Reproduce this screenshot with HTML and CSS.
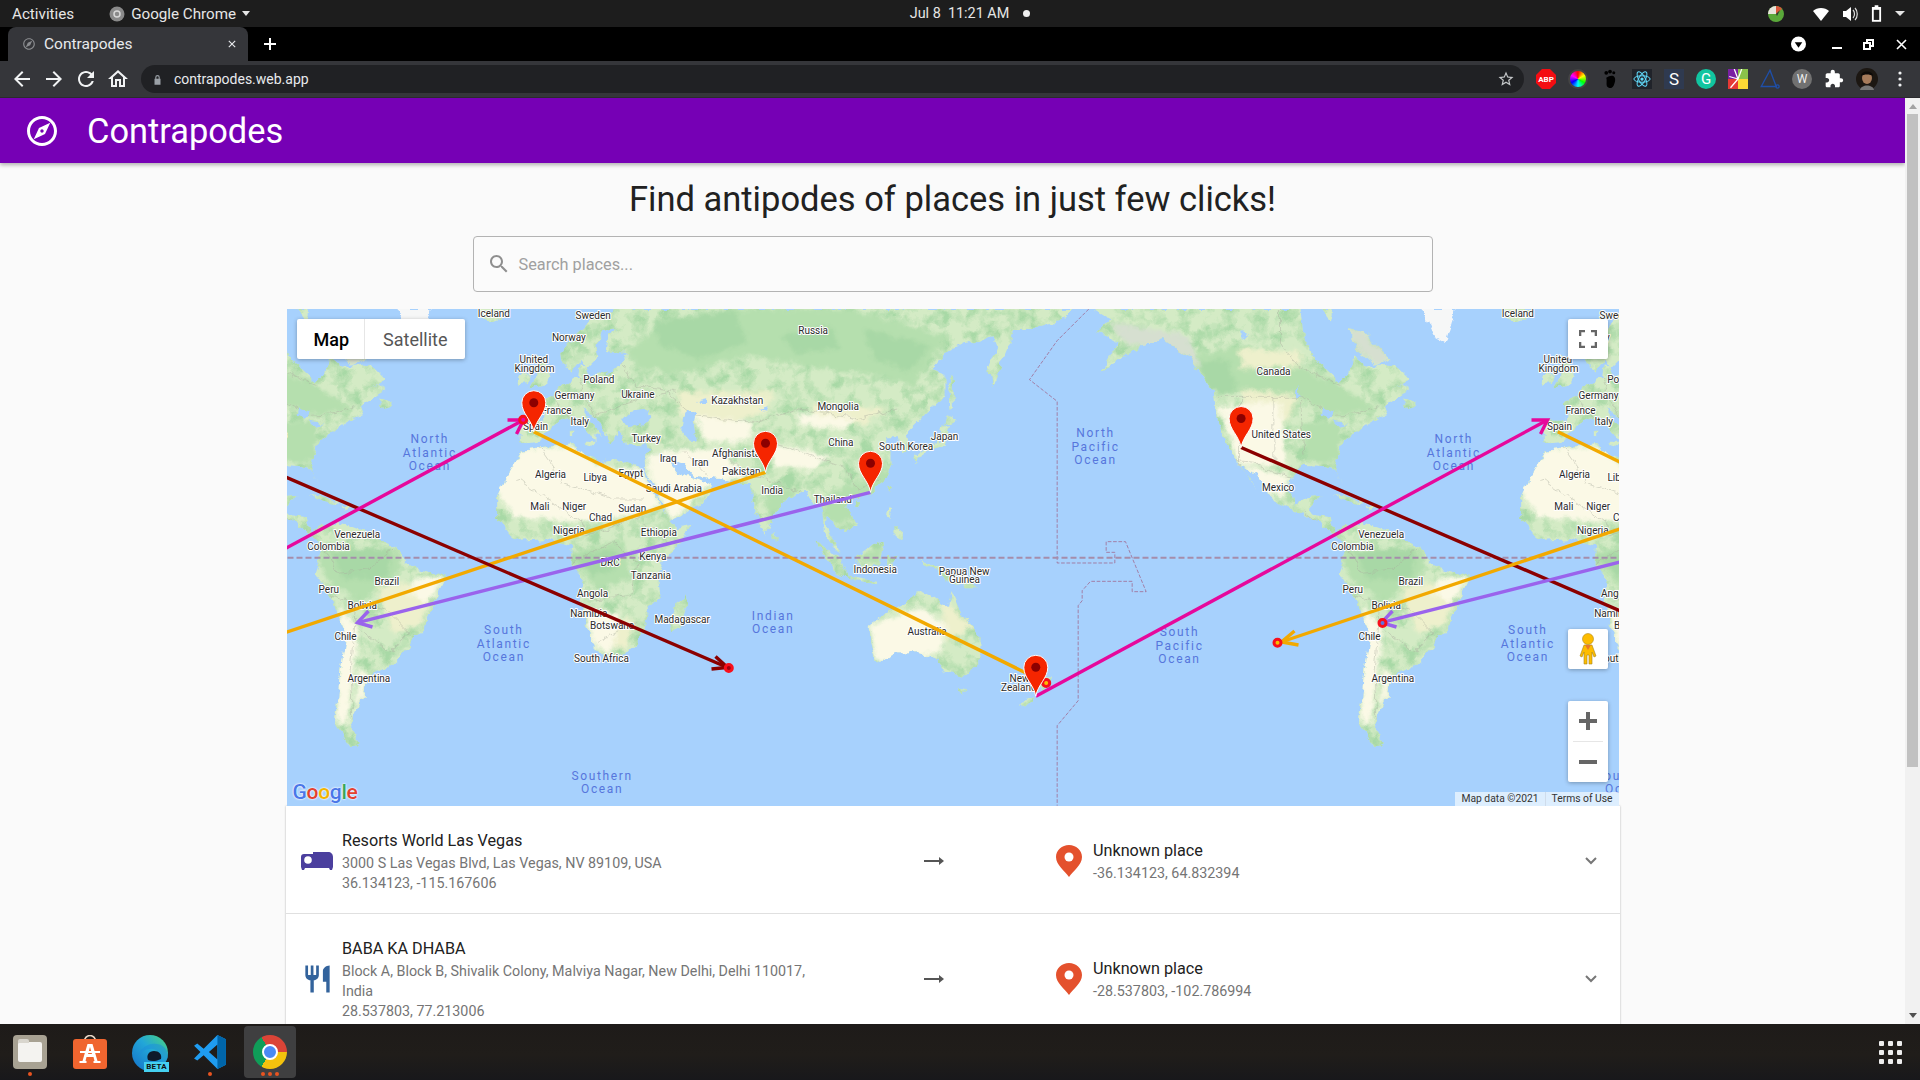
FILE: index.html
```html
<!DOCTYPE html>
<html lang="en">
<head>
<meta charset="utf-8">
<title>Contrapodes</title>
<link rel="stylesheet" href="styles.css">
</head>
<body>
<header class="os-bar">
  <div class="os-left">
    <span class="os-item">Activities</span>
    <span class="os-app"><svg class="os-app-icon" viewBox="0 0 16 16"><circle cx="8" cy="8" r="7.5" fill="#8a8a8a"/><circle cx="8" cy="8" r="3" fill="none" stroke="#d8d8d8" stroke-width="1.5"/></svg>Google Chrome<i class="caret"></i></span>
  </div>
  <div class="os-clock"><span>Jul 8&nbsp;&nbsp;11:21 AM</span><i class="os-dot"></i></div>
  <div class="os-tray">
    <svg class="tray-pie" viewBox="0 0 16 16"><circle cx="8" cy="8" r="8" fill="#5aa83a"/><path d="M8 8V0a8 8 0 0 0-8 8z" fill="#e8e4dc"/><path d="M8 8L8 0a8 8 0 0 1 6 3z" fill="#d8563a"/><path d="M8 8l4-4-3 6z" fill="#333"/></svg>
    <svg class="tray-ic tray-wifi" viewBox="0 0 16 16"><path d="M0 5c4-4 12-4 16 0l-8 10z" fill="#fff"/></svg>
    <svg class="tray-ic tray-vol" viewBox="0 0 16 16"><path d="M1 5h3l5-4v14l-5-4H1z" fill="#fff"/><path d="M11 4c2 2 2 6 0 8M13 2c3 3 3 9 0 12" fill="none" stroke="#ddd" stroke-width="1.2"/></svg>
    <svg class="tray-ic tray-bat" viewBox="0 0 12 18"><path d="M4 0h4v2h3v16H1V2h3z" fill="#fff"/><rect x="3" y="5" width="6" height="11" fill="#1d1d1d"/></svg>
    <i class="caret caret-tray"></i>
  </div>
</header>

<div class="tab-strip">
  <div class="tab">
    <svg class="tab-fav" viewBox="0 0 24 24"><path d="M12 2C6.48 2 2 6.48 2 12s4.48 10 10 10 10-4.48 10-10S17.52 2 12 2zm0 18c-4.41 0-8-3.59-8-8s3.59-8 8-8 8 3.59 8 8-3.59 8-8 8zm-5.5-2.5l7.51-3.49L17.5 6.5 9.99 9.99 6.5 17.5z"/></svg>
    <span class="tab-title">Contrapodes</span>
    <svg class="tab-close" viewBox="0 0 10 10"><path d="M1 1l8 8M9 1l-8 8"/></svg>
  </div>
  <svg class="tab-new" viewBox="0 0 12 12"><path d="M6 0v12M0 6h12"/></svg>
  <div class="win-controls">
    <svg class="win-drop" viewBox="0 0 16 16"><circle cx="8" cy="8" r="8" fill="#fff"/><path d="M4 6h8l-4 6z" fill="#000"/></svg>
    <i class="win-min"></i>
    <svg class="win-max" viewBox="0 0 11 11"><path d="M3 0h8v8H8v3H0V3h3zM5 2v1h3v3h1V2zM2 5v4h4V5z" fill="#fff" fill-rule="evenodd"/></svg>
    <svg class="win-close" viewBox="0 0 11 11"><path d="M1 1l9 9M10 1l-9 9"/></svg>
  </div>
</div>

<div class="chrome-bar">
  <div class="nav-icons">
    <svg class="nav-ic" viewBox="0 0 24 24"><path d="M20 11H7.83l5.59-5.59L12 4l-8 8 8 8 1.41-1.41L7.83 13H20z"/></svg>
    <svg class="nav-ic" viewBox="0 0 24 24"><path d="M12 4l-1.41 1.41L16.17 11H4v2h12.17l-5.58 5.59L12 20l8-8z"/></svg>
    <svg class="nav-ic" viewBox="0 0 24 24"><path d="M17.65 6.35C16.2 4.9 14.21 4 12 4c-4.42 0-7.99 3.58-7.99 8s3.57 8 7.99 8c3.73 0 6.84-2.55 7.73-6h-2.08c-.82 2.33-3.04 4-5.65 4-3.31 0-6-2.69-6-6s2.69-6 6-6c1.66 0 3.14.69 4.22 1.78L13 11h7V4l-2.35 2.35z"/></svg>
    <svg class="nav-ic" viewBox="0 0 24 24"><path d="M12 5.69l5 4.5V18h-2v-6H9v6H7v-7.81l5-4.5M12 3L2 12h3v8h6v-6h2v6h6v-8h3L12 3z"/></svg>
  </div>
  <div class="omnibox">
    <svg class="lock" viewBox="0 0 12 14"><path d="M3 6V4a3 3 0 0 1 6 0v2h1v8H2V6zm1.5 0h3V4a1.5 1.5 0 0 0-3 0z" fill-rule="evenodd"/></svg>
    <span class="url">contrapodes.web.app</span>
    <svg class="star" viewBox="0 0 24 24"><path d="M22 9.24l-7.19-.62L12 2 9.19 8.63 2 9.24l5.46 4.73L5.82 21 12 17.27 18.18 21l-1.63-7.03L22 9.24zM12 15.4l-3.76 2.27 1-4.28-3.32-2.88 4.38-.38L12 6.1l1.71 4.04 4.38.38-3.32 2.88 1 4.28L12 15.4z"/></svg>
  </div>
  <div class="ext-icons">
    <span class="ext ext-abp">ABP</span>
    <span class="ext ext-wheel"></span>
    <svg class="ext" viewBox="0 0 16 16"><path d="M5 7c4-3 8-2 7 3-1 4-2 6-5 5-3-1-1-5-2-8z" fill="#000"/><circle cx="5" cy="3" r="1.5" fill="#000"/><circle cx="8" cy="2" r="1.5" fill="#000"/><circle cx="11" cy="3" r="1.2" fill="#000"/></svg>
    <svg class="ext" viewBox="0 0 16 16"><rect width="16" height="16" fill="#20232a"/><g fill="none" stroke="#61dafb" stroke-width=".8"><ellipse cx="8" cy="8" rx="6.5" ry="2.6"/><ellipse cx="8" cy="8" rx="6.5" ry="2.6" transform="rotate(60 8 8)"/><ellipse cx="8" cy="8" rx="6.5" ry="2.6" transform="rotate(120 8 8)"/></g><circle cx="8" cy="8" r="1.3" fill="#61dafb"/></svg>
    <span class="ext ext-s">S</span>
    <span class="ext ext-g">G</span>
    <svg class="ext" viewBox="0 0 16 16"><rect width="8" height="8" fill="#7a1fa2"/><rect x="8" width="8" height="8" fill="#8bc34a"/><rect y="8" width="8" height="8" fill="#e53935"/><rect x="8" y="8" width="8" height="8" fill="#fdd835"/><path d="M8 8L5 0M8 8l3-8M8 8L2 15M8 8l-7-2" stroke="#fff"/></svg>
    <svg class="ext" viewBox="0 0 16 16"><path d="M8 1L1 14h12z" fill="none" stroke="#1f4fa8" stroke-width="1.1"/><circle cx="14" cy="14" r="1.3" fill="none" stroke="#1f4fa8"/></svg>
    <span class="ext ext-w">W</span>
    <svg class="ext" viewBox="0 0 24 24"><path d="M20.5 11H19V7c0-1.1-.9-2-2-2h-4V3.5C13 2.12 11.88 1 10.5 1S8 2.12 8 3.5V5H4c-1.1 0-1.99.9-1.99 2v3.8H3.5c1.49 0 2.7 1.21 2.7 2.7s-1.21 2.7-2.7 2.7H2V20c0 1.1.9 2 2 2h3.8v-1.5c0-1.49 1.21-2.7 2.7-2.7 1.49 0 2.7 1.21 2.7 2.7V22H17c1.1 0 2-.9 2-2v-4h1.5c1.38 0 2.5-1.12 2.5-2.5S21.88 11 20.5 11z" fill="#fff"/></svg>
    <svg class="ext ext-avatar" viewBox="0 0 22 22"><circle cx="11" cy="11" r="11" fill="#1c1712"/><ellipse cx="11" cy="10" rx="5" ry="6" fill="#a67b5b"/><path d="M5 8c0-6 12-6 12 0-3-2-9-2-12 0z" fill="#0d0a08"/><path d="M4 22c1-6 13-6 14 0z" fill="#777"/></svg>
    <svg class="ext ext-menu" viewBox="0 0 4 16"><circle cx="2" cy="2" r="1.6"/><circle cx="2" cy="8" r="1.6"/><circle cx="2" cy="14" r="1.6"/></svg>
  </div>
</div>

<div class="viewport">
  <div class="page">
    <div class="app-bar">
      <svg class="app-icon" viewBox="0 0 24 24"><path d="M12 2C6.48 2 2 6.48 2 12s4.48 10 10 10 10-4.48 10-10S17.52 2 12 2zm0 18c-4.41 0-8-3.59-8-8s3.59-8 8-8 8 3.59 8 8-3.59 8-8 8zm-5.5-2.5l7.51-3.49L17.5 6.5 9.99 9.99 6.5 17.5zm5.5-6.6c.61 0 1.1.49 1.1 1.1s-.49 1.1-1.1 1.1-1.1-.49-1.1-1.1.49-1.1 1.1-1.1z"/></svg>
      <span class="app-title">Contrapodes</span>
    </div>
    <main class="content">
      <h1 class="headline">Find antipodes of places in just few clicks!</h1>
      <div class="search">
        <svg class="search-icon" viewBox="0 0 24 24"><path d="M15.5 14h-.79l-.28-.27C15.41 12.59 16 11.11 16 9.5 16 5.91 13.09 3 9.5 3S3 5.91 3 9.5 5.91 16 9.5 16c1.61 0 3.09-.59 4.23-1.57l.27.28v.79l5 4.99L20.49 19l-4.99-5zm-6 0C7.01 14 5 11.99 5 9.5S7.01 5 9.5 5 14 7.01 14 9.5 11.99 14 9.5 14z"/></svg>
        <span class="search-text">Search places...</span>
      </div>

      <section class="map">
        <svg class="map-canvas" viewBox="286.5 309 1332 497" xmlns="http://www.w3.org/2000/svg">
          <defs>
            <filter id="soft" x="-5%" y="-5%" width="110%" height="110%"><feGaussianBlur stdDeviation="7"/></filter>
            <filter id="rough" x="-3%" y="-3%" width="106%" height="106%" color-interpolation-filters="sRGB" primitiveUnits="userSpaceOnUse">
              <feTurbulence type="fractalNoise" baseFrequency=".035" numOctaves="3" seed="4" result="n"/>
              <feDisplacementMap in="SourceGraphic" in2="n" scale="26" xChannelSelector="R" yChannelSelector="G"/>
            </filter>
            <filter id="mottle" x="0" y="0" width="100%" height="100%" color-interpolation-filters="sRGB">
              <feTurbulence type="fractalNoise" baseFrequency=".022" numOctaves="4" seed="9"/>
              <feColorMatrix type="matrix" values="0 0 0 0 .66  0 0 0 0 .85  0 0 0 0 .65  2.8 0 0 0 -1.15"/>
            </filter>
            <path id="east-shape" d="M112 345L130 335 185 335 195 300 175 285 235 240 290 205 295 165 320 175 330 200 390 190 420 160 440 135 375 125 385 80 410 60 375 65 345 110 350 150 320 180 300 150 275 185 250 165 245 125 290 75 340 30 400 0 1780 0 1730 40 1660 60 1600 60 1590 100 1560 170 1535 235 1525 170 1550 110 1540 85 1460 100 1400 125 1355 180 1395 195 1395 260 1340 310 1300 350 1275 375 1285 420 1265 430 1255 385 1210 385 1230 420 1230 470 1210 520 1170 555 1125 570 1090 590 1115 620 1125 650 1090 670 1075 650 1040 625 1035 650 1080 735 1070 730 1030 670 1025 590 1000 590 975 545 910 575 870 640 855 680 820 600 810 525 770 525 720 510 640 500 610 465 555 445 590 490 620 500 655 510 695 530 680 565 620 610 565 637 540 580 510 510 497 480 495 440 505 425 495 408 430 410 425 385 415 365 390 405 365 360 345 325 305 300 345 360 368 385 345 375 345 400 325 365 280 325 260 325 225 345 195 370 180 400 150 405 120 400Z
              M125 425L165 420 240 410 285 405 290 425 345 445 350 465 375 455 400 450 490 480 497 490 510 530 540 590 565 635 590 660 630 650 600 700 560 745 530 790 540 860 500 900 490 960 470 1000 430 1040 370 1050 345 1020 320 950 300 880 310 810 270 760 275 710 200 690 120 695 80 670 50 630 50 560 75 510 110 450Z
              M610 855L622 880 600 950 575 970 568 935 590 880Z
              M170 135L195 165 210 205 200 225 150 235 170 200Z M115 200L145 195 140 225 110 230Z M0 0L75 0 70 25 30 40 0 25Z
              M268 362L278 362 278 386 268 386Z M315 398L345 398 340 412 318 406Z M878 665L892 690 880 697 875 680Z
              M1305 460L1340 425 1390 410 1410 360 1390 345 1378 395 1340 415 1302 445Z M1400 320L1430 335 1410 350 1395 345Z M1405 205L1420 210 1420 295 1410 300Z
              M1228 530L1233 535 1222 552Z M1130 575L1142 578 1135 592 1128 588Z M1225 590L1235 600 1230 630 1220 620Z M1245 650L1270 670 1270 695 1245 680Z
              M1125 745L1160 720 1190 695 1208 710 1195 770 1140 775Z M1010 700L1050 725 1080 755 1105 810 1075 795 1035 745Z M1105 800L1190 815 1185 822 1105 812Z M1220 745L1250 740 1235 765 1245 790 1220 790Z
              M1315 755L1370 770 1420 795 1490 835 1460 835 1400 815 1370 790Z
              M1165 950L1240 900 1295 870 1315 845 1350 860 1400 895 1410 840 1440 910 1500 990 1500 1050 1450 1100 1390 1090 1370 1050 1320 1030 1240 1030 1190 1065 1165 970Z
              M1435 1135L1460 1140 1445 1160Z M1695 1098L1715 1100 1705 1125 1685 1145 1680 1130Z M1660 1160L1660 1175 1635 1197 1618 1185Z"/>
            <path id="am-shape" d="M-20 0L30 30 -10 70 50 100 0 190 80 140 130 105 190 90 260 140 340 250 350 340 385 420 410 455 472 545 445 510 420 465 470 500 510 565 545 590 600 610 650 640 695 670 715 690 735 730 715 790 760 860 810 980 790 1100 775 1240 820 1315 850 1300 820 1250 860 1160 880 1100 960 1060 1040 960 1075 880 1105 800 1000 770 960 720 870 670 790 640 740 650 705 668 690 625 640 618 625 600 660 560 620 565 585 590 565 545 570 500 605 470 680 475 705 485 722 525 700 470 730 400 780 360 830 330 860 315 850 295 930 240 905 225 870 245 925 210 880 165 800 175 755 140 750 190 720 220 660 165 610 90 600 0Z
              M740 60L790 70 870 150 830 170 770 120Z M660 0L700 0 690 40Z M905 265L950 285 920 300Z M700 555L745 560 790 585 740 575Z M798 590L830 595 805 605Z"/>
            <clipPath id="clip-east"><use href="#east-shape"/></clipPath>
            <clipPath id="clip-am"><use href="#am-shape"/></clipPath>
            <g id="land-east" transform="translate(480 309) scale(.33333)">
              <g filter="url(#rough)">
              <use href="#east-shape" class="land"/>
              <g clip-path="url(#clip-east)">
                <rect x="-50" y="-20" width="1900" height="1300" filter="url(#mottle)"/>
                <g filter="url(#soft)">
                  <path class="forest" d="M440 130L560 30 760 0 1100 0 1400 80 1300 230 1200 200 1040 180 800 140 620 190 470 180Z"/>
                  <path class="forest-d" d="M520 40L760 0 800 100 660 150 540 110Z M1150 60L1350 110 1290 190 1180 150Z M900 80L1050 50 1080 120 940 130Z"/>
                  <path class="forest" d="M280 730L430 690 450 800 360 840 300 790Z M1030 560L1220 480 1240 540 1110 640 1040 640Z M1125 745L1208 710 1195 770Z M1315 755L1490 835 1400 815Z M860 540L960 540 920 590 860 620Z"/>
                  <path class="forest-d" d="M290 740L400 720 410 780 330 800Z"/>
                  <path class="pale" d="M590 250L880 250 860 310 700 350 600 320Z M1000 280L1220 300 1150 345 1000 340Z M370 930L460 930 440 1020 360 1010Z M1380 870L1480 950 1400 1000Z"/>
                  <path class="cream" d="M40 540L120 420 290 410 350 470 490 480 540 590 480 620 300 640 100 625Z M500 440L590 420 720 420 800 500 690 530 570 635 510 510Z M640 320L820 340 800 400 680 400Z M870 400L1050 440 1000 480 880 470Z M950 310L1130 330 1090 360 960 350Z M310 890L420 920 390 1040 340 1010Z M1165 950L1320 890 1400 950 1380 1030 1190 1060Z"/>
                </g>
                <path class="border" d="M110 510L250 600 300 640M180 420L250 520 400 570 490 570M300 640L320 680 480 620M495 640L560 700M270 760L400 700 470 760 450 860 330 870M350 1000L470 940M610 430L680 500M720 420L800 500 860 510 960 550M640 320L820 340 960 300 1130 330 1250 300M880 400L1100 480 1130 540 1200 510M200 240L280 340M290 210L340 320 420 290 560 250 640 320M420 160L470 230 590 250"/>
              </g>
              <path class="sea" d="M425 330L450 305 490 300 510 325 490 345 440 355Z M625 300L610 330 605 370 625 395 650 395 640 350 650 310Z M655 270L680 265 680 285 660 285Z M830 300L865 295 860 305Z"/>
              </g>
            </g>
            <g id="land-am" transform="translate(1100 309) scale(.33333)">
              <g filter="url(#rough)">
              <use href="#am-shape" class="land"/>
              <path class="snow" d="M960 0L1065 0 1035 100 1000 80Z"/>
              <g clip-path="url(#clip-am)">
                <rect x="-50" y="-20" width="1250" height="1400" filter="url(#mottle)"/>
                <g filter="url(#soft)">
                  <path class="forest" d="M260 140L420 110 600 170 730 240 830 300 700 320 600 270 420 240 350 260Z M740 720L960 720 980 780 860 880 770 830 730 780Z M600 340L720 340 720 460 620 460Z M560 580L700 670 640 640Z"/>
                  <path class="forest-d" d="M280 160L380 150 410 250 350 260Z M760 720L950 720 930 810 800 810Z"/>
                  <path class="pale" d="M420 120L600 130 600 170 420 180Z M420 240L590 260 560 340 430 340Z M900 830L1080 820 1030 950 950 970Z"/>
                  <path class="cream" d="M350 290L540 280 560 470 420 470Z M430 470L570 500 550 570 490 550Z M790 890L850 960 830 1090 810 1250 780 1240Z M850 1080L880 1100 830 1240Z M1010 810L1100 800 1060 880 1000 860Z"/>
                  <path class="rock" d="M30 40L260 80 300 180 190 100 80 110Z M740 60L790 70 870 150 830 170 770 120Z"/>
                </g>
                <path class="border" d="M355 265H600L650 290 700 320 780 310 830 290M410 455L460 460 520 490 570 500M540 0V100L590 170 720 230M420 265V470M520 265V470M600 270L610 440M610 610L650 640M740 710L780 790 880 780 950 720M760 860L830 880 930 900 1000 970 940 1030M840 900L820 1090 830 1240M850 960L940 1030"/>
              </g>
              <path class="sea" d="M665 295L700 305 690 330 660 320Z M705 335L745 345 705 352Z M590 230L600 265 585 265Z M420 60L450 75 420 90Z"/>
              </g>
            </g>
            <g id="labels-east" transform="translate(480 309) scale(.33333)">
              <text class="lb" x="40" y="12">Iceland</text><text class="lb" x="338" y="20">Sweden</text><text class="lb" x="265" y="87">Norway</text><text class="lb" x="160" y="152">United</text><text class="lb" x="162" y="180">Kingdom</text><text class="lb" x="355" y="212">Poland</text><text class="lb" x="282" y="261">Germany</text><text class="lb" x="228" y="304">France</text><text class="lb" x="472" y="258">Ukraine</text><text class="lb" x="165" y="354">Spain</text><text class="lb" x="298" y="337">Italy</text><text class="lb" x="998" y="66">Russia</text><text class="lb" x="770" y="276">Kazakhstan</text><text class="lb" x="1073" y="294">Mongolia</text><text class="lb" x="497" y="388">Turkey</text><text class="lb" x="563" y="448">Iraq</text><text class="lb" x="659" y="462">Iran</text><text class="lb" x="775" y="435">Afghanistan</text><text class="lb" x="782" y="488">Pakistan</text><text class="lb" x="1081" y="402">China</text><text class="lb" x="1277" y="413">South Korea</text><text class="lb" x="1392" y="384">Japan</text><text class="lb" x="875" y="546">India</text><text class="lb" x="1057" y="572">Thailand</text><text class="lb" x="210" y="498">Algeria</text><text class="lb" x="344" y="507">Libya</text><text class="lb" x="451" y="495">Egypt</text><text class="lb" x="580" y="540">Saudi Arabia</text><text class="lb" x="178" y="594">Mali</text><text class="lb" x="281" y="594">Niger</text><text class="lb" x="455" y="600">Sudan</text><text class="lb" x="360" y="627">Chad</text><text class="lb" x="265" y="666">Nigeria</text><text class="lb" x="535" y="672">Ethiopia</text><text class="lb" x="517" y="744">Kenya</text><text class="lb" x="389" y="762">DRC</text><text class="lb" x="511" y="801">Tanzania</text><text class="lb" x="336" y="855">Angola</text><text class="lb" x="325" y="915">Namibia</text><text class="lb" x="395" y="950">Botswana</text><text class="lb" x="605" y="933">Madagascar</text><text class="lb" x="363" y="1050">South Africa</text><text class="lb" x="1184" y="783">Indonesia</text><text class="lb" x="1451" y="788">Papua New</text><text class="lb" x="1452" y="813">Guinea</text><text class="lb" x="1340" y="968">Australia</text><text class="lb" x="1617" y="1110">New</text><text class="lb" x="1615" y="1137">Zealand</text>
              <text class="oc" x="878" y="920">Indian</text><text class="oc" x="878" y="960">Ocean</text>
              <text class="oc" x="365" y="1401">Southern</text><text class="oc" x="365" y="1440">Ocean</text>
            </g>
            <g id="labels-am" transform="translate(1100 309) scale(.33333)">
              <text class="lb" x="519" y="188">Canada</text><text class="lb" x="542" y="378">United States</text><text class="lb" x="533" y="537">Mexico</text><text class="lb" x="842" y="678">Venezuela</text><text class="lb" x="756" y="714">Colombia</text><text class="lb" x="931" y="819">Brazil</text><text class="lb" x="757" y="843">Peru</text><text class="lb" x="857" y="891">Bolivia</text><text class="lb" x="807" y="984">Chile</text><text class="lb" x="877" y="1110">Argentina</text>
              <text class="oc" x="1060" y="390">North</text><text class="oc" x="1060" y="432">Atlantic</text><text class="oc" x="1060" y="471">Ocean</text>
              <text class="oc" x="1282" y="963">South</text><text class="oc" x="1282" y="1005">Atlantic</text><text class="oc" x="1282" y="1044">Ocean</text>
              <text class="oc" x="-15" y="372">North</text><text class="oc" x="-15" y="414">Pacific</text><text class="oc" x="-15" y="453">Ocean</text>
              <text class="oc" x="237" y="968">South</text><text class="oc" x="237" y="1010">Pacific</text><text class="oc" x="237" y="1050">Ocean</text>
            </g>
            <g id="routes">
              <path class="rt rt-purple" d="M870 492.3L359 622.2"/>
              <path class="rt rt-purple" d="M368 611L357 622.7 372 627"/>
              <path class="rt rt-red" d="M1240.6 447.5L1751 667.5"/>
              <path class="rt rt-red" d="M1739 656.5L1751 667.5 1735 669"/>
              <path class="rt rt-pink" d="M1035.3 696.3L1546 420.5"/>
              <path class="rt rt-pink" d="M1531 420L1547 420 1540 434"/>
              <path class="rt rt-orange" d="M533.3 431.7L1044 682"/>
              <path class="rt rt-orange" d="M765 472.3L258 641.5"/>
              <path class="rt rt-orange" d="M270 631L257 642 274 645"/>
            </g>
            <linearGradient id="edge-grad" x1="0" y1="1" x2="1" y2="0">
              <stop offset="0" stop-color="#1470c8"/><stop offset=".55" stop-color="#22a6d8"/><stop offset="1" stop-color="#4cd67a"/>
            </linearGradient>
          </defs>
          <rect class="sea" x="286" y="309" width="1334" height="498"/>
          <use href="#land-east"/><use href="#land-east" x="1024"/>
          <use href="#land-am"/><use href="#land-am" x="-1024"/>
          <path class="dateline" transform="translate(780 309) scale(.33333)" d="M925 0L830 95 747 212 830 277V762H1003V730H977V698H1035L1097 848H1055V817H930L905 845V875L893 890V1175L830 1250V1490"/>
          <path class="equator" d="M287 557.7H1619"/>
          <use href="#labels-east"/><use href="#labels-east" x="1024"/>
          <use href="#labels-am"/><use href="#labels-am" x="-1024"/>
          <use href="#routes"/><use href="#routes" x="-1024"/><use href="#routes" x="1024"/>
          <circle class="dot dot-pink" cx="522.7" cy="419.7" r="3.5"/>
          <circle class="dot dot-red" cx="728.3" cy="668" r="3.5"/>
          <circle class="dot dot-blue" cx="1382" cy="623" r="3.5"/>
          <circle class="dot dot-yellow" cx="1277" cy="642.7" r="3.5"/>
          <circle class="dot dot-yellow" cx="1045.7" cy="683" r="3.5"/>
          <g class="pin" transform="translate(533.3 431.7)"><path d="M0 0C-2-12-12-18-12-29A12 12 0 1 1 12-29C12-18 2-12 0 0Z"/><circle cy="-29" r="4.5"/></g>
          <g class="pin" transform="translate(765 472.3)"><path d="M0 0C-2-12-12-18-12-29A12 12 0 1 1 12-29C12-18 2-12 0 0Z"/><circle cy="-29" r="4.5"/></g>
          <g class="pin" transform="translate(870 492.3)"><path d="M0 0C-2-12-12-18-12-29A12 12 0 1 1 12-29C12-18 2-12 0 0Z"/><circle cy="-29" r="4.5"/></g>
          <g class="pin" transform="translate(1240.6 447.5)"><path d="M0 0C-2-12-12-18-12-29A12 12 0 1 1 12-29C12-18 2-12 0 0Z"/><circle cy="-29" r="4.5"/></g>
          <g class="pin" transform="translate(1035.3 696.3)"><path d="M0 0C-2-12-12-18-12-29A12 12 0 1 1 12-29C12-18 2-12 0 0Z"/><circle cy="-29" r="4.5"/></g>
        </svg>

        <div class="map-type">
          <span class="map-type-btn map-type-on">Map</span>
          <span class="map-type-btn">Satellite</span>
        </div>
        <div class="map-ctl map-full"><svg class="full-ic" viewBox="0 0 18 18"><path d="M1 6V1h5M12 1h5v5M17 12v5h-5M6 17H1v-5"/></svg></div>
        <div class="map-ctl map-peg"><svg class="peg-ic" viewBox="0 0 18 32"><circle cx="9" cy="6" r="5.5" fill="#fdbc00" stroke="#b08a1c" stroke-width=".6"/><path d="M5 12h8l4 11-2 1-2-5v12h-3v-9H8v9H5V19l-2 5-2-1z" fill="#fdbc00" stroke="#a5831f" stroke-width=".6"/><path d="M6 12h6l-3 5z" fill="#e8792b"/></svg></div>
        <div class="map-ctl map-zoom">
          <svg class="zoom-ic" viewBox="0 0 18 18"><path d="M0 7h7V0h4v7h7v4h-7v7H7v-7H0z"/></svg>
          <i class="zoom-sep"></i>
          <svg class="zoom-ic" viewBox="0 0 18 18"><path d="M0 7h18v4H0z"/></svg>
        </div>
        <div class="google-logo"><b class="g-b">G</b><b class="g-r">o</b><b class="g-y">o</b><b class="g-b">g</b><b class="g-g">l</b><b class="g-r">e</b></div>
        <div class="map-attr"><span>Map data ©2021</span><span>Terms of Use</span></div>
      </section>

      <section class="places">
        <article class="place">
          <div class="place-icon"><svg class="ic-bed" viewBox="0 0 32 18"><path d="M3 2h9V0h15c3 0 5 2 5 5v10l-1 3h-2l-1-2H4l-1 2H1l-1-3V5c0-2 1-3 3-3z"/><circle cx="7" cy="8" r="3.8" fill="#fff"/></svg></div>
          <div class="place-main">
            <div class="place-name">Resorts World Las Vegas</div>
            <div class="place-sub">3000 S Las Vegas Blvd, Las Vegas, NV 89109, USA</div>
            <div class="place-sub">36.134123, -115.167606</div>
          </div>
          <div class="place-arrow"><svg class="arrow-ic" viewBox="0 0 20 10"><path d="M0 4h15V1l5 4-5 4V6H0z"/></svg></div>
          <svg class="drop-ic" viewBox="0 0 26 32"><path d="M13 0c7 0 13 5 13 12 0 8-9 14-13 20C9 26 0 20 0 12 0 5 6 0 13 0z"/><circle cx="13" cy="12" r="4.5" fill="#fff"/></svg>
          <div class="place-anti">
            <div class="place-name">Unknown place</div>
            <div class="place-sub">-36.134123, 64.832394</div>
          </div>
          <svg class="chev" viewBox="0 0 12 8"><path d="M1 1l5 5 5-5"/></svg>
        </article>
        <article class="place">
          <div class="place-icon"><svg class="ic-food" viewBox="2 1 20 22"><path d="M11 9H9V2H7v7H5V2H3v7c0 2.12 1.66 3.84 3.75 3.97V22h2.5v-9.03C11.34 12.84 13 11.12 13 9V2h-2v7zm5-3v8h2.5v8H21V2c-2.76 0-5 2.24-5 4z"/></svg></div>
          <div class="place-main">
            <div class="place-name">BABA KA DHABA</div>
            <div class="place-sub">Block A, Block B, Shivalik Colony, Malviya Nagar, New Delhi, Delhi 110017, India</div>
            <div class="place-sub">28.537803, 77.213006</div>
          </div>
          <div class="place-arrow"><svg class="arrow-ic" viewBox="0 0 20 10"><path d="M0 4h15V1l5 4-5 4V6H0z"/></svg></div>
          <svg class="drop-ic" viewBox="0 0 26 32"><path d="M13 0c7 0 13 5 13 12 0 8-9 14-13 20C9 26 0 20 0 12 0 5 6 0 13 0z"/><circle cx="13" cy="12" r="4.5" fill="#fff"/></svg>
          <div class="place-anti">
            <div class="place-name">Unknown place</div>
            <div class="place-sub">-28.537803, -102.786994</div>
          </div>
          <svg class="chev" viewBox="0 0 12 8"><path d="M1 1l5 5 5-5"/></svg>
        </article>
      </section>
    </main>
  </div>
  <div class="scrollbar">
    <i class="sb-up"></i>
    <i class="sb-thumb"></i>
    <i class="sb-down"></i>
  </div>
</div>

<footer class="dock">
  <div class="dock-item">
    <div class="files-ic"><i class="folder"></i></div>
    <div class="dock-dots"><i></i></div>
  </div>
  <div class="dock-item">
    <svg class="dock-ic" viewBox="0 0 34 34"><path d="M11 8c0-10 12-10 12 0" fill="none" stroke="#e8d8c8" stroke-width="1.5"/><rect y="4" width="34" height="30" rx="3" fill="#f0652f"/><path d="M14.5 9h5l5 17h3v2h-7v-2h1l-1-4h-7l-1 4h1v2h-7v-2h3zm2.5 3l-2 7h4z M7 16h20v2H7z" fill="#fff"/></svg>
    <div class="dock-dots"></div>
  </div>
  <div class="dock-item">
    <div class="edge-ic">
      <svg class="edge-swirl" viewBox="0 0 36 36"><circle cx="18" cy="18" r="18" fill="url(#edge-grad)"/><path d="M36 22C36 12 28 8 20 9 12 10 7 16 5 24 9 16 15 13 21 14c5 1 8 5 6 10-3 2-8 2-10-2 1 5 4 8 8 10 6-2 10-6 11-10z" fill="#1d8fd8" opacity=".55"/><path d="M16 25c-2-5 1-9 6-9 5 0 8 3 7 8-4 2-9 3-13 1z" fill="#0e1a2a"/></svg>
      <span class="edge-beta">BETA</span>
    </div>
    <div class="dock-dots"></div>
  </div>
  <div class="dock-item">
    <svg class="dock-ic" viewBox="0 0 32 32"><path d="M23 0l8 4v24l-8 4-13-13-6 5-3-2 6-6-6-6 3-2 6 5zm0 9l-8 7 8 7z" fill="#1f9cf0" fill-rule="evenodd"/><path d="M23 0l8 4v24l-8 4z" fill="#0065a9"/></svg>
    <div class="dock-dots"><i></i></div>
  </div>
  <div class="dock-item dock-item-on">
    <div class="chrome-ic"><span class="chrome-core"></span></div>
    <div class="dock-dots"><i></i><i></i><i></i></div>
  </div>
  <div class="app-grid"><i></i><i></i><i></i><i></i><i></i><i></i><i></i><i></i><i></i></div>
</footer>
</body>
</html>
```

FILE: styles.css
```css
* { box-sizing: border-box; }
html, body { margin: 0; height: 100%; }
body {
  width: 1920px; height: 1080px; overflow: hidden;
  display: flex; flex-direction: column;
  font-family: Roboto, "Liberation Sans", sans-serif;
  background: #fafafa;
}
i { display: block; }

/* GNOME bar */
.os-bar {
  height: 27px; flex: none; background: #1d1d1d; color: #e6e6e6;
  display: grid; grid-template-columns: 1fr auto 1fr; align-items: center;
  font-size: 15.2px; padding: 0 12px;
}
.os-left { display: flex; align-items: center; gap: 35px; }
.os-app { display: flex; align-items: center; }
.os-app-icon { width: 16px; height: 16px; margin-right: 6px; }
.caret { width: 0; height: 0; margin-left: 6px; border: 4.5px solid transparent; border-top: 5px solid #e6e6e6; border-bottom: 0; }
.os-clock { display: flex; align-items: center; gap: 14px; font-size: 14.4px; transform: translateX(10px); }
.os-dot { width: 7px; height: 7px; border-radius: 50%; background: #eee; }
.os-tray { display: flex; align-items: center; justify-content: flex-end; }
.tray-pie { width: 16px; height: 16px; margin-right: 29px; }
.tray-ic { height: 16px; }
.tray-wifi { width: 16px; margin-right: 13px; }
.tray-vol { width: 16px; margin-right: 13px; }
.tray-bat { width: 11px; height: 17px; margin-right: 13px; }
.caret-tray { margin-left: 0; margin-right: 3px; border-width: 5px 5px 0; }

/* Chrome tab strip */
.tab-strip { height: 34px; flex: none; background: #000; display: flex; align-items: stretch; padding-left: 8px; }
.tab {
  width: 240px; background: #35363a; border-radius: 8px 8px 0 0;
  display: flex; align-items: center; padding: 0 12px 0 14px; color: #e8eaed;
}
.tab-fav { width: 14px; height: 14px; fill: #8b8d90; margin-right: 8px; flex: none; }
.tab-title { flex: 1; font-size: 15.5px; }
.tab-close { width: 8px; height: 8px; stroke: #e8eaed; stroke-width: 1.4; fill: none; }
.tab-new { width: 12px; height: 12px; stroke: #fff; stroke-width: 2; align-self: center; margin-left: 16px; }
.win-controls { margin-left: auto; display: flex; align-items: center; padding-right: 13px; }
.win-drop { width: 15px; height: 16px; margin-right: 26px; }
.win-min { width: 10px; height: 2px; background: #fff; margin: 8px 21px 0 0; }
.win-max { width: 11px; height: 11px; margin-right: 22px; }
.win-close { width: 11px; height: 11px; stroke: #fff; stroke-width: 1.6; fill: none; }

/* Chrome toolbar */
.chrome-bar { height: 37px; flex: none; background: #35363a; display: flex; align-items: center; border-bottom: 1px solid #2b2b2e; }
.nav-icons { display: flex; width: 141px; padding-left: 10px; gap: 8px; }
.nav-ic { width: 24px; height: 24px; fill: #f1f3f4; }
.omnibox {
  width: 1383px; height: 28px; background: #202124; border-radius: 14px;
  display: flex; align-items: center; padding: 0 9px 0 12px;
}
.lock { width: 9px; height: 11px; fill: #9aa0a6; margin-right: 12px; }
.url { flex: 1; color: #e8eaed; font-size: 14px; }
.star { width: 18px; height: 18px; fill: #c4c7c9; }
.ext-icons { display: flex; align-items: center; padding-left: 12px; gap: 12px; }
.ext { width: 20px; height: 20px; flex: none; display: flex; align-items: center; justify-content: center; }
.ext-abp { background: #f40d12; color: #fff; font-size: 8px; font-weight: 700; clip-path: polygon(30% 0, 70% 0, 100% 30%, 100% 70%, 70% 100%, 30% 100%, 0 70%, 0 30%); }
.ext-wheel { border-radius: 50%; background: conic-gradient(#f00, #ff0, #0f0, #0ff, #00f, #f0f, #f00); border: 2px solid #444; }
.ext-s { background: #2f3a50; color: #fff; font-size: 17px; }
.ext-g { background: #11c5a0; border-radius: 50%; color: #fff; font-size: 15px; }
.ext-w { background: #717171; border-radius: 50%; color: #eee; font-size: 12px; }
.ext-avatar { width: 22px; height: 22px; }
.ext-menu { width: 4px; height: 16px; fill: #f1f3f4; margin-left: 8px; }

/* Page frame */
.viewport { flex: 1; min-height: 0; display: flex; }
.page { flex: 1; min-width: 0; overflow: hidden; background: #fafafa; }

.scrollbar { width: 15px; flex: none; background: #f1f1f1; display: flex; flex-direction: column; align-items: center; }
.sb-up { width: 0; height: 0; margin-top: 6px; border: 4px solid transparent; border-top: 0; border-bottom: 5px solid #a3a3a3; }
.sb-thumb { width: 11px; height: 653px; margin-top: 5px; background: #c1c1c1; }
.sb-down { width: 0; height: 0; margin-top: auto; margin-bottom: 6px; border: 4px solid transparent; border-bottom: 0; border-top: 5px solid #505050; }

.app-bar {
  height: 65px; background: #7600b5; color: #fff;
  display: flex; align-items: center; padding-left: 24px;
  box-shadow: 0 2px 4px rgba(0,0,0,.3);
  position: relative;
}
.app-icon { width: 36px; height: 36px; fill: #fff; margin-right: 27px; }
.app-title { font-size: 34.4px; }

.content { display: flex; flex-direction: column; align-items: center; }
.headline { margin: 16px 0 17px; font-size: 34.5px; line-height: 40px; font-weight: 400; color: #212121; }
.search {
  width: 960px; height: 56px; background: #fbfbfb;
  border: 1px solid #b3b3b3; border-radius: 4px;
  display: flex; align-items: center; padding-left: 13px;
  margin-bottom: 17px;
}
.search-icon { width: 24px; height: 24px; fill: #8f8f8f; margin-right: 8px; }
.search-text { font-size: 16.3px; color: #a0a0a0; }

/* Map */
.map { width: 1332px; height: 497px; position: relative; overflow: hidden; flex: none; }
.map-canvas { width: 1332px; height: 497px; display: block; }
.sea { fill: #a7d1fd; }
.land { fill: #d4ebc5; }
.snow { fill: #f6f7f7; }
.forest { fill: #b5dfae; }
.forest-d { fill: #a8d8a6; }
.pale { fill: #eef0cc; }
.cream { fill: #fbf9e6; }
.rock { fill: #d6dfd0; }
.border { fill: none; stroke: #a9ad9f; stroke-width: 1.6; opacity: .8; }
.lb {
  font: 400 30px Roboto, sans-serif; text-anchor: middle; dominant-baseline: central;
  fill: #2a2a2a; stroke: #fff; stroke-width: 6px; stroke-linejoin: round; paint-order: stroke;
}
.oc {
  font: 400 36px Roboto, sans-serif; text-anchor: middle; dominant-baseline: central;
  letter-spacing: 5px; fill: #5676dc;
}
.equator { stroke: #a58dab; stroke-width: 2; stroke-dasharray: 6 3; fill: none; }
.dateline { stroke: #a06f95; stroke-width: 2.5; stroke-dasharray: 11 5; fill: none; }
.rt { fill: none; stroke-width: 3.4; stroke-linejoin: miter; }
.rt-purple { stroke: #9a63ec; }
.rt-red { stroke: #8b0000; }
.rt-pink { stroke: #e6089c; }
.rt-orange { stroke: #f2a900; }
.dot { stroke: #f80f1b; stroke-width: 3; }
.dot-pink { fill: #e6089c; }
.dot-red { fill: #a00010; }
.dot-blue { fill: #5f72e0; }
.dot-yellow { fill: #f8c000; }
.pin path { fill: #f52500; stroke: #fff; stroke-width: 1; }
.pin circle { fill: #8c0000; }

.map-type {
  position: absolute; left: 10.5px; top: 10px; height: 40px; width: 168px;
  display: flex; background: #fff; border-radius: 2px; box-shadow: 0 1px 4px rgba(0,0,0,.3);
}
.map-type-btn { display: flex; align-items: center; justify-content: center; font-size: 18px; color: #565656; width: 101px; padding-left: 1px; }
.map-type-on { width: 68px; color: #000; font-weight: 500; border-right: 1px solid #e6e6e6; padding-left: 2px; }
.map-ctl {
  position: absolute; left: 1281.5px; width: 40px; background: #fff; border-radius: 2px;
  box-shadow: 0 1px 4px rgba(0,0,0,.3);
  display: flex; flex-direction: column; align-items: center; justify-content: center;
}
.map-full { top: 10px; height: 40px; }
.map-peg { top: 320px; height: 40px; }
.map-zoom { top: 392px; height: 81px; justify-content: flex-start; }
.full-ic { width: 18px; height: 18px; fill: none; stroke: #666; stroke-width: 2.6; }
.peg-ic { width: 18px; height: 32px; }
.zoom-ic { width: 18px; height: 18px; fill: #666; margin: 11px 0; }
.zoom-sep { width: 30px; height: 1px; background: #e6e6e6; }
.google-logo { position: absolute; left: 6px; bottom: 2px; font-size: 21px; line-height: 24px; letter-spacing: -.3px; text-shadow: 0 0 2px #fff, 0 0 2px #fff; }
.google-logo b { font-weight: 500; }
.g-b { color: #4a77e8; } .g-r { color: #e3412f; } .g-y { color: #f2b500; } .g-g { color: #3aa757; }
.map-attr {
  position: absolute; right: 0; bottom: 0; height: 14px; display: flex;
  font-size: 10.3px; line-height: 14px; color: #333; background: rgba(255,255,255,.62);
}
.map-attr span { padding: 0 6px; }
.map-attr span + span { border-left: 1px solid #cfdceb; }

/* Places */
.places { width: 1334px; background: #fff; box-shadow: 0 0 2px rgba(0,0,0,.3); flex: none; }
.place { display: flex; align-items: center; padding: 23px 0 20px; border-bottom: 1px solid #e0e0e0; }
.place-icon { width: 56.5px; display: flex; justify-content: center; flex: none; padding-left: 7px; }
.ic-bed { width: 32px; height: 18px; fill: #4b3f9e; flex: none; }
.ic-food { width: 27px; height: 30px; fill: #33639c; flex: none; }
.place-main { width: 480px; flex: none; }
.place-name { font-size: 16.2px; line-height: 23px; margin-bottom: 1px; color: #212121; }
.place-sub { font-size: 14.3px; line-height: 20px; color: #757575; }
.place-arrow { width: 224px; display: flex; justify-content: center; flex: none; }
.arrow-ic { width: 20px; height: 10px; fill: #555; }
.drop-ic { width: 26px; height: 32px; fill: #e4512d; margin-left: 10px; margin-right: 11px; flex: none; }
.place-anti { flex: 1; }
.chev { width: 12px; height: 8px; fill: none; stroke: #777; stroke-width: 2; margin-right: 23px; flex: none; }

/* Dock */
.dock {
  height: 56px; flex: none; display: flex; align-items: stretch; padding: 2px 0;
  background: linear-gradient(#1e1b19, #201d1a 55%, #18181b);
}
.dock-item { width: 60px; display: flex; flex-direction: column; align-items: center; padding-top: 9px; border-radius: 4px; }
.dock-ic { width: 34px; height: 34px; }
.dock-item-on { background: #3f3f40; width: 52px; margin: 0 4px; }
.dock-dots { display: flex; gap: 3px; margin-top: 3px; height: 4px; }
.dock-dots i { width: 4px; height: 4px; border-radius: 50%; background: #e95420; }
.files-ic { width: 34px; height: 34px; border-radius: 4px; background: #a8a293; display: flex; align-items: center; justify-content: center; }
.folder { width: 24px; height: 20px; background: #f4f3f0; border-radius: 2px; position: relative; }
.folder::before { content: ""; position: absolute; left: 0; top: -3px; width: 11px; height: 4px; background: #d9d6ce; border-radius: 2px 2px 0 0; }
.edge-ic { width: 36px; height: 36px; position: relative; }
.edge-swirl { display: block; width: 36px; height: 36px; }
.edge-beta { position: absolute; right: -1px; bottom: -1px; background: #45d0f0; color: #111; font-size: 8px; font-weight: 700; line-height: 10px; padding: 0 2px; letter-spacing: .3px; }
.chrome-ic {
  width: 34px; height: 34px; border-radius: 50%; display: flex; align-items: center; justify-content: center;
  background: conic-gradient(#db4437 0 90deg, #f4c20d 90deg 210deg, #0f9d58 210deg 330deg, #db4437 330deg);
}
.chrome-core { width: 12px; height: 12px; border-radius: 50%; background: #4a8af4; border: 2.5px solid #fff; box-sizing: content-box; }
.app-grid { margin-left: auto; margin-right: 18px; align-self: center; display: grid; grid-template-columns: repeat(3, 5px); gap: 4px; }
.app-grid i { width: 5px; height: 5px; background: #eee; border-radius: 1px; }
```
